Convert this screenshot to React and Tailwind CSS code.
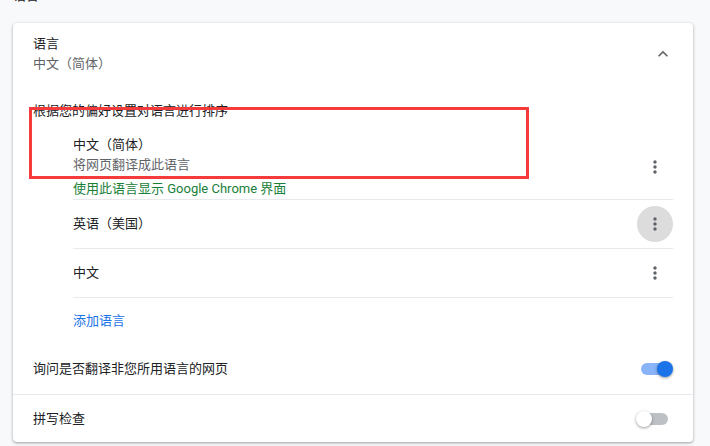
import React from "react";

function MoreVert() {
  return (
    <svg width="20" height="20" viewBox="0 0 24 24" fill="#5f6368">
      <path d="M12 8c1.1 0 2-.9 2-2s-.9-2-2-2-2 .9-2 2 .9 2 2 2zm0 2c-1.1 0-2 .9-2 2s.9 2 2 2 2-.9 2-2-.9-2-2-2zm0 6c-1.1 0-2 .9-2 2s.9 2 2 2 2-.9 2-2-.9-2-2-2z" />
    </svg>
  );
}

function DotsButton({ active }) {
  return (
    <div
      className={
        "w-[36px] h-[36px] rounded-full flex items-center justify-center shrink-0 " +
        (active ? "bg-[#dcdcdc]" : "")
      }
    >
      <MoreVert />
    </div>
  );
}

function Toggle({ on }) {
  return (
    <div className="relative w-[34px] h-[16px] shrink-0">
      <div
        className={
          "absolute left-[2px] top-[2px] w-[30px] h-[12px] rounded-full " +
          (on ? "bg-[#8ab4f8]" : "bg-[#bdc1c6]")
        }
      />
      <div
        className={
          "absolute top-0 w-[16px] h-[16px] rounded-full shadow-[0_1px_3px_0_rgba(0,0,0,0.4)] " +
          (on ? "right-0 bg-[#1a73e8]" : "left-0 bg-white")
        }
      />
    </div>
  );
}

export default function App() {
  return (
    <div className="relative w-[710px] h-[446px] overflow-hidden bg-[#f8f9fa] font-['Roboto','Noto_Sans_CJK_SC',sans-serif] text-[13px] text-[#202124]">
      <div className="px-[13px]">
        <div className="-mt-[14px] leading-[20px] text-[#202124]">语言</div>
        <div className="mt-[17px] w-[680px] bg-white rounded-[4px] shadow-[0_1px_2px_0_rgba(60,64,67,0.3),0_1px_3px_1px_rgba(60,64,67,0.15)]">
          {/* header */}
          <div className="h-[62px] flex items-center justify-between pl-[20px] pr-[12px]">
            <div className="leading-[20px]">
              <div>语言</div>
              <div className="text-[#5f6368]">中文（简体）</div>
            </div>
            <div className="w-[36px] h-[36px] flex items-center justify-center">
              <svg width="20" height="20" viewBox="0 0 24 24" fill="#5f6368">
                <path d="M12 8l-6 6 1.41 1.41L12 10.83l4.59 4.58L18 14z" />
              </svg>
            </div>
          </div>

          <div className="mt-[16px] pl-[20px] leading-[20px]">根据您的偏好设置对语言进行排序</div>

          {/* language list */}
          <div className="mt-[14px] ml-[60px] mr-[20px]">
            <div className="flex items-center justify-between border-b border-[#e8eaed] h-[65px]">
              <div className="leading-[20px]">
                <div>中文（简体）</div>
                <div className="text-[#5f6368]">将网页翻译成此语言</div>
                <div className="mt-[4px] text-[#188038]">使用此语言显示 Google Chrome 界面</div>
              </div>
              <DotsButton />
            </div>
            <div className="flex items-center justify-between border-b border-[#e8eaed] h-[49px]">
              <div className="leading-[20px]">英语（美国）</div>
              <DotsButton active />
            </div>
            <div className="flex items-center justify-between border-b border-[#e8eaed] h-[49px]">
              <div className="leading-[20px]">中文</div>
              <DotsButton />
            </div>
            <div className="flex items-center h-[46px]">
              <div className="leading-[20px] text-[#1a73e8]">添加语言</div>
            </div>
          </div>

          <div className="flex items-center justify-between h-[51px] pl-[20px] pr-[20px] border-b border-[#e8eaed]">
            <div className="leading-[20px]">询问是否翻译非您所用语言的网页</div>
            <Toggle on />
          </div>
          <div className="flex items-center justify-between h-[47px] pl-[20px] pr-[23px]">
            <div className="leading-[20px]">拼写检查</div>
            <Toggle />
          </div>
        </div>
      </div>

      {/* red annotation box */}
      <div className="absolute left-[29px] top-[107px] w-[500px] h-[72px] border-[3px] border-[#f53b3b]" />
    </div>
  );
}
